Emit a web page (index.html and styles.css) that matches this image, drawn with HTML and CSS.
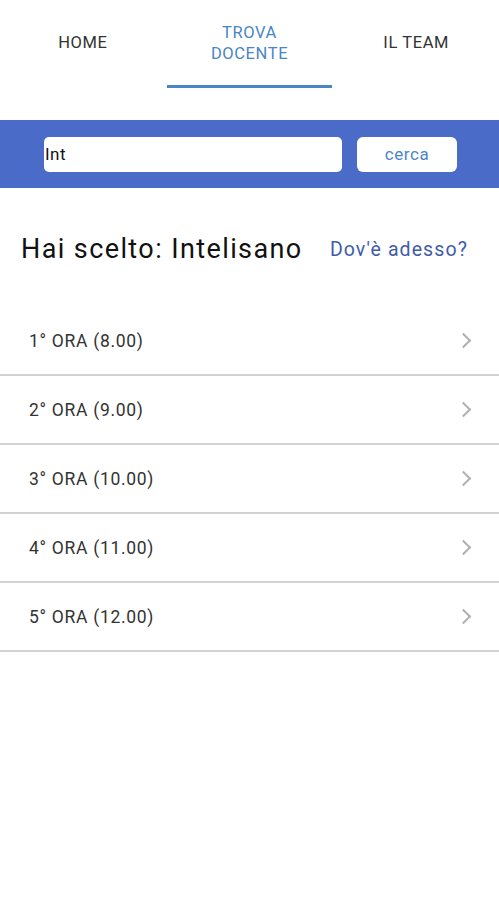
FILE: index.html
```html
<!DOCTYPE html>
<html lang="it">
<head>
    <meta charset="UTF-8">
    <meta name="viewport" content="width=device-width, initial-scale=1.0">
    <title>Trova Docente</title>
    <link rel="stylesheet" href="styles.css">
</head>
<body>
    <!-- Tab in alto -->
    <nav class="tabs">
        <div class="tab">HOME</div>
        <div class="tab active">TROVA<br>DOCENTE</div>
        <div class="tab">IL TEAM</div>
    </nav>

    <!-- Barra di ricerca -->
    <div class="search-bar">
        <input class="search-input" type="text" value="Int">
        <button class="search-btn">cerca</button>
    </div>

    <div class="chosen">
        <div class="chosen-name">Hai scelto: Intelisano</div>
        <div class="chosen-link">Dov'è adesso?</div>
    </div>

    <ul class="hours">
        <li class="hour-row"><span>1° ORA (8.00)</span><span class="chevron"></span></li>
        <li class="hour-row"><span>2° ORA (9.00)</span><span class="chevron"></span></li>
        <li class="hour-row"><span>3° ORA (10.00)</span><span class="chevron"></span></li>
        <li class="hour-row"><span>4° ORA (11.00)</span><span class="chevron"></span></li>
        <li class="hour-row"><span>5° ORA (12.00)</span><span class="chevron"></span></li>
    </ul>
</body>
</html>
```

FILE: styles.css
```css
body {
    margin: 0;
    padding: 0;
    font-family: Roboto, 'Noto Sans', sans-serif;
    background-color: #fff;
    color: #222;
}

.tabs {
    display: flex;
    height: 88px;
}

.tab {
    flex: 1;
    display: flex;
    align-items: center;
    justify-content: center;
    text-align: center;
    font-size: 16.5px;
    letter-spacing: 0.6px;
    line-height: 21px;
    color: #333;
    padding-bottom: 4px;
    box-sizing: border-box;
}

.tab.active {
    color: #4a86c5;
    border-bottom: 3px solid #4a86c5;
    margin: 0 1px;
    padding-bottom: 0;
}

.search-bar {
    margin-top: 32px;
    background-color: #4b6bc8;
    height: 68px;
    display: flex;
    align-items: center;
    padding: 0 42px 0 44px;
    gap: 15px;
}

.search-input {
    flex: 1;
    height: 35px;
    box-sizing: border-box;
    border: none;
    border-radius: 5px;
    padding: 0 1px;
    font-family: inherit;
    font-size: 17px;
    letter-spacing: 0.5px;
    color: #111;
    outline: none;
}

.search-btn {
    width: 100px;
    height: 35px;
    border: none;
    border-radius: 6px;
    background-color: #fff;
    color: #4a86c5;
    font-family: inherit;
    font-size: 17px;
    letter-spacing: 0.6px;
}

.chosen {
    display: flex;
    justify-content: space-between;
    align-items: center;
    padding: 45px 31px 0 21px;
}

.chosen-name {
    font-size: 27px;
    letter-spacing: 1.4px;
    color: #111;
}

.chosen-link {
    font-size: 19.5px;
    letter-spacing: 1.1px;
    color: #3f5bab;
}

.hours {
    list-style: none;
    margin: 42px 0 0;
    padding: 0;
}

.hour-row {
    display: flex;
    justify-content: space-between;
    align-items: center;
    height: 67px;
    padding: 0 30px 0 29px;
    border-bottom: 2px solid #d2d2d2;
    font-size: 17.5px;
    letter-spacing: 0.7px;
    color: #333;
}

.chevron {
    width: 9px;
    height: 9px;
    border-top: 2px solid #b0b0b0;
    border-right: 2px solid #b0b0b0;
    transform: rotate(45deg);
}
```
